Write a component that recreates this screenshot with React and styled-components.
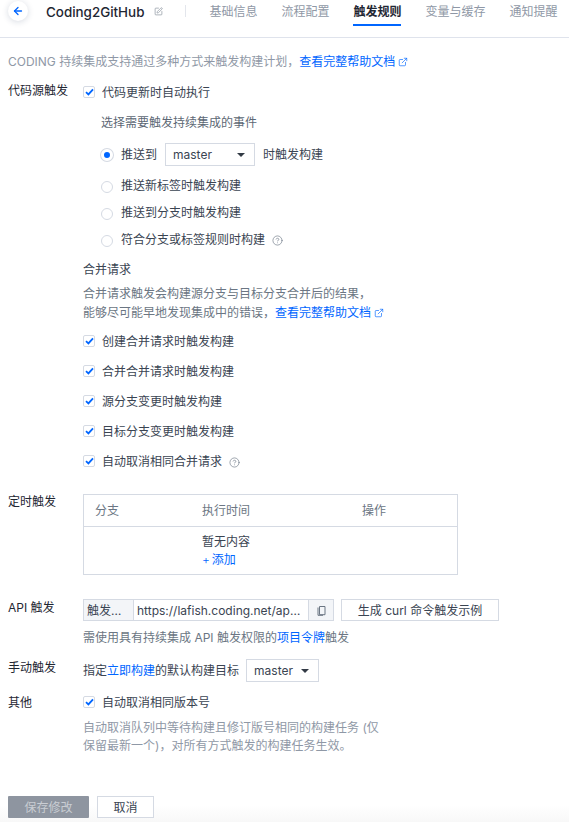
import React from "react";
import styled, { createGlobalStyle } from "styled-components";
import { ArrowLeft, CircleHelp, ExternalLink, SquarePen } from "lucide-react";

const GlobalStyle = createGlobalStyle`
  html, body {
    margin: 0;
    padding: 0;
    background: #fff;
  }
  body {
    font-family: Inter, "Noto Sans CJK SC", sans-serif;
    font-size: 12px;
    line-height: 18px;
    color: #3a4452;
  }
`;

const tabs = ["基础信息", "流程配置", "触发规则", "变量与缓存", "通知提醒"];
const mergeOptions = [
  "创建合并请求时触发构建",
  "合并合并请求时触发构建",
  "源分支变更时触发构建",
  "目标分支变更时触发构建",
];

function Checkbox({ children }) {
  return (
    <CheckRow>
      <CheckBox>
        <svg width="9" height="8" viewBox="0 0 9 8">
          <path d="M1 4.2 3.4 6.4 8 1.4" fill="none" stroke="#0066ff" strokeWidth="1.8" />
        </svg>
      </CheckBox>
      {children}
    </CheckRow>
  );
}

function Select({ width, left = 8, children }) {
  return (
    <SelectBox $width={width} $left={left}>
      {children}
      <Caret />
    </SelectBox>
  );
}

function Help() {
  return (
    <HelpIcon>
      <CircleHelp size={11} strokeWidth={1.4} />
    </HelpIcon>
  );
}

function DocLink() {
  return (
    <Link href="#">
      查看完整帮助文档
      <ExternalLink size={10} strokeWidth={1.6} />
    </Link>
  );
}

export default function App() {
  return (
    <Page>
      <GlobalStyle />
      <Header>
        <BackButton>
          <ArrowLeft size={12} strokeWidth={2.6} />
        </BackButton>
        <Title>Coding2GitHub</Title>
        <EditIcon>
          <SquarePen size={9} strokeWidth={1.6} />
        </EditIcon>
        <Divider />
        <Tabs>
          {tabs.map((t) => (
            <Tab key={t} $active={t === "触发规则"}>
              {t}
            </Tab>
          ))}
        </Tabs>
      </Header>

      <Main>
        <Intro>
          CODING 持续集成支持通过多种方式来触发构建计划，
          <DocLink />
        </Intro>

        <FormRow $top={11}>
          <Label>代码源触发</Label>
          <Field $pad={2}>
            <Checkbox>代码更新时自动执行</Checkbox>
            <Subtle>选择需要触发持续集成的事件</Subtle>
            <RadioGroup>
              <RadioRow $top={11}>
                <Radio $checked />
                推送到
                <Select width={90}>master</Select>
                时触发构建
              </RadioRow>
              <RadioRow $top={11}>
                <Radio />
                推送新标签时触发构建
              </RadioRow>
              <RadioRow $top={9}>
                <Radio />
                推送到分支时触发构建
              </RadioRow>
              <RadioRow $top={9}>
                <Radio />
                符合分支或标签规则时构建
                <Help />
              </RadioRow>
            </RadioGroup>
            <SectionTitle>合并请求</SectionTitle>
            <Description>
              合并请求触发会构建源分支与目标分支合并后的结果，
              <br />
              能够尽可能早地发现集成中的错误，
              <DocLink />
            </Description>
            <MergeList>
              {mergeOptions.map((o) => (
                <Checkbox key={o}>{o}</Checkbox>
              ))}
              <Checkbox>
                自动取消相同合并请求
                <Help />
              </Checkbox>
            </MergeList>
          </Field>
        </FormRow>

        <FormRow $top={22}>
          <Label>定时触发</Label>
          <Field>
            <Table>
              <TableHead>
                <span>分支</span>
                <span>执行时间</span>
                <span>操作</span>
              </TableHead>
              <TableBody>
                <span />
                <EmptyCell>
                  暂无内容
                  <AddLink href="#">
                    <Plus>+</Plus>添加
                  </AddLink>
                </EmptyCell>
              </TableBody>
            </Table>
          </Field>
        </FormRow>

        <FormRow $top={24}>
          <Label>API 触发</Label>
          <Field>
            <ApiRow>
              <InputGroup>
                <Addon $width={50}>触发…</Addon>
                <UrlText>https://lafish.coding.net/ap…</UrlText>
                <CopyAddon>
                  <svg width="9" height="11" viewBox="0 0 9 11" fill="none" stroke="#6b7683">
                    <path d="M2.5 1.5h5.5v8.2H2.5z" />
                    <path d="M1 2.5v7.8h5" />
                  </svg>
                </CopyAddon>
              </InputGroup>
              <OutlineButton $width={158}>生成 curl 命令触发示例</OutlineButton>
            </ApiRow>
            <Note>
              需使用具有持续集成 API 触发权限的<TextLink href="#">项目令牌</TextLink>触发
            </Note>
          </Field>
        </FormRow>

        <FormRow $top={12}>
          <Label>手动触发</Label>
          <Field>
            <ManualRow>
              <span>
                指定<TextLink href="#">立即构建</TextLink>的默认构建目标
              </span>
              <Select width={73} left={7}>
                master
              </Select>
            </ManualRow>
          </Field>
        </FormRow>

        <FormRow $top={12}>
          <Label>其他</Label>
          <Field>
            <Checkbox>自动取消相同版本号</Checkbox>
            <Hint>
              自动取消队列中等待构建且修订版号相同的构建任务 (仅
              <br />
              保留最新一个)，对所有方式触发的构建任务生效。
            </Hint>
          </Field>
        </FormRow>

        <Footer>
          <SaveButton>保存修改</SaveButton>
          <OutlineButton $width={57}>取消</OutlineButton>
        </Footer>
      </Main>
    </Page>
  );
}

const Page = styled.div`
  width: 569px;
  height: 822px;
  overflow: hidden;
  background: linear-gradient(to bottom, #fff 805px, #f8f8f8 822px);
`;

const Header = styled.header`
  display: flex;
  align-items: flex-start;
  height: 37px;
  border-bottom: 1px solid #dfe3ec;
`;

const BackButton = styled.div`
  display: flex;
  align-items: center;
  justify-content: center;
  width: 20px;
  height: 20px;
  margin: 1px 0 0 8px;
  border-radius: 50%;
  color: #0066ff;
  box-shadow: 0 1px 6px rgba(30, 50, 90, 0.18);
`;

const Title = styled.div`
  margin: 3px 0 0 18px;
  font-size: 13.4px;
  line-height: 18px;
  font-weight: 500;
  color: #1f2733;
`;

const EditIcon = styled.span`
  display: flex;
  margin: 7px 0 0 10px;
  color: #7b8490;
`;

const Divider = styled.span`
  width: 1px;
  height: 12px;
  margin: 5px 0 0 22px;
  background: #e3e6ec;
`;

const Tabs = styled.nav`
  display: flex;
  gap: 24px;
  margin-left: 23px;
`;

const Tab = styled.div`
  height: 26px;
  padding-top: 3px;
  box-sizing: border-box;
  white-space: nowrap;
  color: ${(p) => (p.$active ? "#1f2733" : "#8f98a6")};
  font-weight: ${(p) => (p.$active ? 600 : 400)};
  border-bottom: 2px solid ${(p) => (p.$active ? "#0066ff" : "transparent")};
`;

const Main = styled.main`
  padding: 15px 0 0 8px;
`;

const Intro = styled.div`
  white-space: nowrap;
  color: #8f98a6;
`;

const Link = styled.a`
  display: inline-flex;
  align-items: center;
  gap: 3px;
  color: #0066ff;
  text-decoration: none;
`;

const TextLink = styled.a`
  color: #0066ff;
  text-decoration: none;
`;

const FormRow = styled.section`
  display: flex;
  margin-top: ${(p) => p.$top}px;
`;

const Label = styled.div`
  flex: 0 0 75px;
  white-space: nowrap;
  color: #1f2733;
`;

const Field = styled.div`
  flex: 1;
  min-width: 0;
  padding-top: ${(p) => p.$pad || 0}px;
`;

const CheckRow = styled.label`
  display: flex;
  align-items: center;
  white-space: nowrap;
`;

const CheckBox = styled.span`
  display: flex;
  align-items: center;
  justify-content: center;
  width: 10px;
  height: 10px;
  margin: 0 7px 2px 0;
  border: 1px solid #d5dae3;
  border-radius: 2px;
`;

const Subtle = styled.div`
  margin: 12px 0 0 18px;
  color: #5d6875;
`;

const RadioGroup = styled.div`
  padding-left: 18px;
`;

const RadioRow = styled.label`
  display: flex;
  align-items: center;
  min-height: 18px;
  margin-top: ${(p) => p.$top}px;
  white-space: nowrap;
`;

const Radio = styled.span`
  box-sizing: border-box;
  width: 12px;
  height: 12px;
  margin: 1px 8px 0 0;
  border-radius: 50%;
  border: ${(p) => (p.$checked ? "3px solid #fff" : "1px solid #d5dae3")};
  background: ${(p) => (p.$checked ? "#0066ff" : "#fff")};
  box-shadow: ${(p) => (p.$checked ? "0 0 0 1px #d5dae3" : "none")};
`;

const SelectBox = styled.div`
  display: flex;
  align-items: center;
  justify-content: space-between;
  box-sizing: border-box;
  width: ${(p) => p.$width}px;
  height: 23px;
  margin: 0 8px 0 ${(p) => p.$left}px;
  padding: 0 9px 0 7px;
  border: 1px solid #d5dae3;
`;

const Caret = styled.span`
  width: 0;
  height: 0;
  border-left: 4px solid transparent;
  border-right: 4px solid transparent;
  border-top: 4px solid #323a45;
`;

const HelpIcon = styled.span`
  display: inline-flex;
  margin-left: 7px;
  color: #6b7683;
`;

const SectionTitle = styled.div`
  margin-top: 12px;
`;

const Description = styled.div`
  margin-top: 5px;
  line-height: 19px;
  white-space: nowrap;
  color: #6b7683;
`;

const MergeList = styled.div`
  display: flex;
  flex-direction: column;
  gap: 12px;
  margin-top: 11px;
`;

const Table = styled.div`
  width: 375px;
  height: 81px;
  box-sizing: border-box;
  margin-top: 1px;
  border: 1px solid #d5dae3;
`;

const TableHead = styled.div`
  display: grid;
  grid-template-columns: 107px 160px 1fr;
  height: 32px;
  padding: 7px 0 0 11px;
  box-sizing: border-box;
  border-bottom: 1px solid #d5dae3;
  color: #6b7683;
`;

const TableBody = styled.div`
  display: grid;
  grid-template-columns: 107px 1fr;
  padding: 6px 0 0 11px;
`;

const EmptyCell = styled.div`
  display: flex;
  flex-direction: column;
  align-items: flex-start;
`;

const AddLink = styled.a`
  color: #0066ff;
  text-decoration: none;
`;

const Plus = styled.span`
  margin-right: 2px;
  font-weight: 300;
`;

const ApiRow = styled.div`
  display: flex;
  gap: 7px;
`;

const InputGroup = styled.div`
  display: flex;
  box-sizing: border-box;
  width: 251px;
  height: 22px;
  border: 1px solid #d5dae3;
  line-height: 20px;
  white-space: nowrap;
`;

const Addon = styled.div`
  box-sizing: border-box;
  flex: 0 0 ${(p) => p.$width}px;
  padding: 1px 0 0 3px;
  background: #f3f5f8;
  border-right: 1px solid #d5dae3;
  overflow: hidden;
`;

const UrlText = styled.div`
  flex: 1;
  min-width: 0;
  padding: 1px 0 0 3px;
  overflow: hidden;
`;

const CopyAddon = styled.div`
  display: flex;
  align-items: center;
  justify-content: center;
  flex: 0 0 24px;
  background: #f3f5f8;
  border-left: 1px solid #d5dae3;
`;

const OutlineButton = styled.button`
  box-sizing: border-box;
  width: ${(p) => p.$width}px;
  height: 22px;
  padding: 1px 0 0;
  border: 1px solid #d5dae3;
  background: #fff;
  color: #3a4452;
  font: inherit;
  white-space: nowrap;
`;

const Note = styled.div`
  margin-top: 8px;
  color: #6b7683;
  white-space: nowrap;
`;

const ManualRow = styled.div`
  display: flex;
  align-items: center;
  white-space: nowrap;
`;

const Hint = styled.div`
  margin-top: 7px;
  color: #8f98a6;
  white-space: nowrap;
`;

const Footer = styled.div`
  display: flex;
  gap: 8px;
  margin-top: 41px;
`;

const SaveButton = styled.button`
  width: 81px;
  height: 22px;
  padding: 1px 0 0;
  border: none;
  border-radius: 1px;
  background: #8e95a0;
  color: #c9cdd3;
  font: inherit;
`;
